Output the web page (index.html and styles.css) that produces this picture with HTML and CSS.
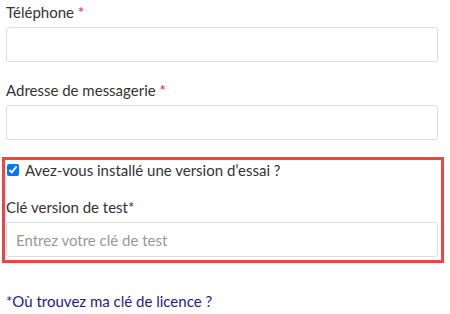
FILE: index.html
```html
<!DOCTYPE html>
<html lang="fr">
<head>
    <meta charset="UTF-8">
    <meta name="viewport" content="width=device-width, initial-scale=1.0">
    <title>Formulaire</title>
    <link rel="stylesheet" href="styles.css">
</head>
<body>
    <form class="form">
        <div class="field">
            <label class="label" for="phone">Téléphone <span class="required">*</span></label>
            <input class="input" id="phone" type="tel">
        </div>

        <div class="field">
            <label class="label" for="email">Adresse de messagerie <span class="required">*</span></label>
            <input class="input" id="email" type="email">
        </div>

        <div class="trial">
            <label class="check-row">
                <input class="checkbox" type="checkbox" checked>
                <span>Avez-vous installé une version d’essai ?</span>
            </label>
            <label class="label" for="test-key">Clé version de test*</label>
            <input class="input" id="test-key" type="text" placeholder="Entrez votre clé de test">
        </div>

        <a class="help-link" href="#">*Où trouvez ma clé de licence ?</a>
    </form>
</body>
</html>
```

FILE: styles.css
```css
body {
    margin: 0;
    font-family: Lato, "Open Sans", sans-serif;
    font-size: 15px;
    color: #333;
    background-color: white;
}

.form {
    padding: 2px 12px 0 6px;
}

.field {
    margin-bottom: 18px;
}

.label {
    display: block;
    line-height: 20px;
    margin-bottom: 5px;
}

.required {
    color: #e8173f;
}

.input {
    display: block;
    box-sizing: border-box;
    width: 432px;
    height: 35px;
    margin: 0;
    padding: 0 9px;
    border: 1px solid #ddd;
    border-radius: 3px;
    font-family: inherit;
    font-size: 15px;
    color: #333;
}

.input::placeholder {
    color: #999;
}

.trial {
    width: 434px;
    margin: -1px 0 0 -4px;
    padding: 0 1px 3px 1px;
    border: 3px solid #ef4444;
}

.check-row {
    display: flex;
    align-items: center;
    line-height: 20px;
    margin-bottom: 17px;
}

.checkbox {
    width: 12px;
    height: 12px;
    margin: 0 6px 0 1px;
}

.help-link {
    display: block;
    margin-top: 28px;
    line-height: 20px;
    color: #1c1c8e;
    text-decoration: none;
}
```
